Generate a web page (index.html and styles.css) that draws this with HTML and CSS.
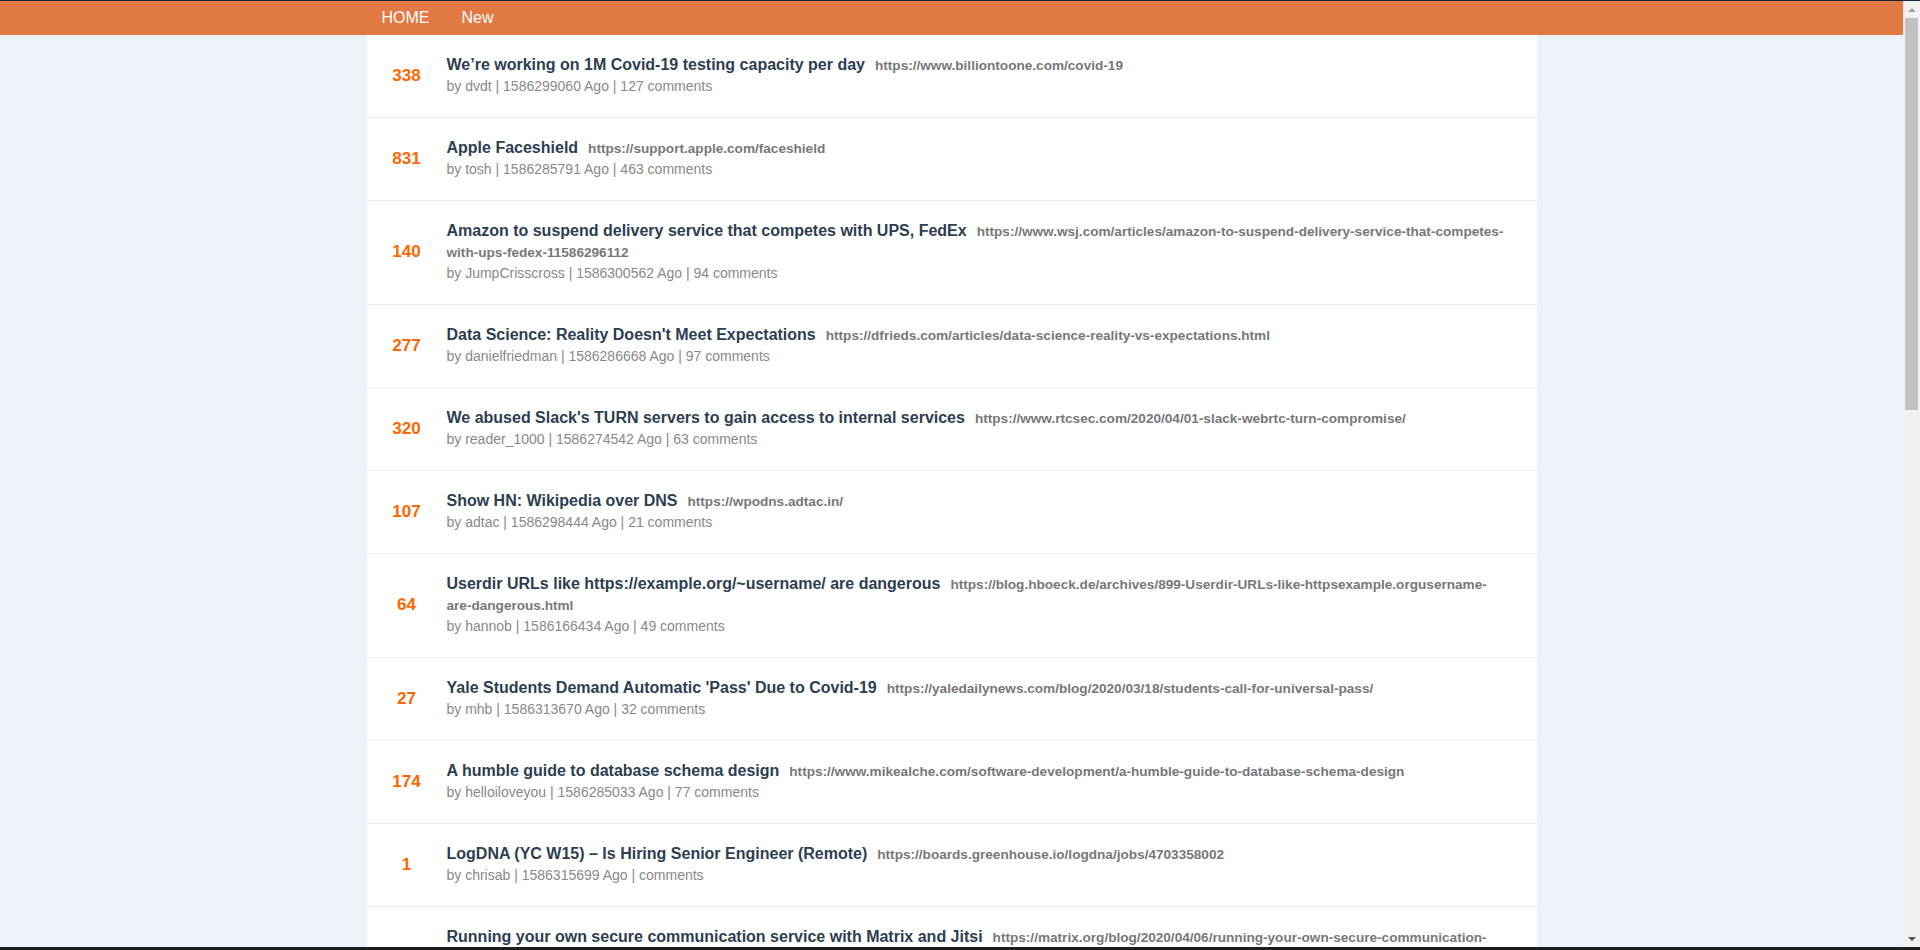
FILE: index.html
```html
<!DOCTYPE html>
<html lang="en">
<head>
<meta charset="utf-8">
<title>Hacker News</title>
<link rel="stylesheet" href="styles.css">
</head>
<body>
<header class="topbar">
  <nav class="container nav">
    <a class="nav-link" href="#">HOME</a>
    <a class="nav-link" href="#">New</a>
  </nav>
</header>
<main class="container list">
  <article class="story">
    <div class="score">338</div>
    <div class="body">
      <div class="headline"><a class="title" href="#">We’re working on 1M Covid-19 testing capacity per day</a><a class="url" href="#">https://www.billiontoone.com/covid-19</a></div>
      <div class="meta">by dvdt | 1586299060 Ago | 127 comments</div>
    </div>
  </article>
  <article class="story">
    <div class="score">831</div>
    <div class="body">
      <div class="headline"><a class="title" href="#">Apple Faceshield</a><a class="url" href="#">https://support.apple.com/faceshield</a></div>
      <div class="meta">by tosh | 1586285791 Ago | 463 comments</div>
    </div>
  </article>
  <article class="story">
    <div class="score">140</div>
    <div class="body">
      <div class="headline"><a class="title" href="#">Amazon to suspend delivery service that competes with UPS, FedEx</a><a class="url" href="#">https://www.wsj.com/articles/amazon-to-suspend-delivery-service-that-competes-with-ups-fedex-11586296112</a></div>
      <div class="meta">by JumpCrisscross | 1586300562 Ago | 94 comments</div>
    </div>
  </article>
  <article class="story">
    <div class="score">277</div>
    <div class="body">
      <div class="headline"><a class="title" href="#">Data Science: Reality Doesn't Meet Expectations</a><a class="url" href="#">https://dfrieds.com/articles/data-science-reality-vs-expectations.html</a></div>
      <div class="meta">by danielfriedman | 1586286668 Ago | 97 comments</div>
    </div>
  </article>
  <article class="story">
    <div class="score">320</div>
    <div class="body">
      <div class="headline"><a class="title" href="#">We abused Slack's TURN servers to gain access to internal services</a><a class="url" href="#">https://www.rtcsec.com/2020/04/01-slack-webrtc-turn-compromise/</a></div>
      <div class="meta">by reader_1000 | 1586274542 Ago | 63 comments</div>
    </div>
  </article>
  <article class="story">
    <div class="score">107</div>
    <div class="body">
      <div class="headline"><a class="title" href="#">Show HN: Wikipedia over DNS</a><a class="url" href="#">https://wpodns.adtac.in/</a></div>
      <div class="meta">by adtac | 1586298444 Ago | 21 comments</div>
    </div>
  </article>
  <article class="story">
    <div class="score">64</div>
    <div class="body">
      <div class="headline"><a class="title" href="#">Userdir URLs like https://example.org/~username/ are dangerous</a><a class="url" href="#">https://blog.hboeck.de/archives/899-Userdir-URLs-like-httpsexample.orgusername-are-dangerous.html</a></div>
      <div class="meta">by hannob | 1586166434 Ago | 49 comments</div>
    </div>
  </article>
  <article class="story">
    <div class="score">27</div>
    <div class="body">
      <div class="headline"><a class="title" href="#">Yale Students Demand Automatic 'Pass' Due to Covid-19</a><a class="url" href="#">https://yaledailynews.com/blog/2020/03/18/students-call-for-universal-pass/</a></div>
      <div class="meta">by mhb | 1586313670 Ago | 32 comments</div>
    </div>
  </article>
  <article class="story">
    <div class="score">174</div>
    <div class="body">
      <div class="headline"><a class="title" href="#">A humble guide to database schema design</a><a class="url" href="#">https://www.mikealche.com/software-development/a-humble-guide-to-database-schema-design</a></div>
      <div class="meta">by helloiloveyou | 1586285033 Ago | 77 comments</div>
    </div>
  </article>
  <article class="story">
    <div class="score">1</div>
    <div class="body">
      <div class="headline"><a class="title" href="#">LogDNA (YC W15) – Is Hiring Senior Engineer (Remote)</a><a class="url" href="#">https://boards.greenhouse.io/logdna/jobs/4703358002</a></div>
      <div class="meta">by chrisab | 1586315699 Ago | comments</div>
    </div>
  </article>
  <article class="story">
    <div class="score">151</div>
    <div class="body">
      <div class="headline"><a class="title" href="#">Running your own secure communication service with Matrix and Jitsi</a><a class="url" href="#">https://matrix.org/blog/2020/04/06/running-your-own-secure-communication-service-with-matrix-and-jitsi</a></div>
      <div class="meta">by Arathorn | 1586278903 Ago | 44 comments</div>
    </div>
  </article>
</main>
<div class="scrollbar" aria-hidden="true">
  <div class="sb-btn"><span class="sb-arrow-up"></span></div>
  <div class="sb-track"><div class="sb-thumb"></div></div>
  <div class="sb-btn"><span class="sb-arrow-down"></span></div>
</div>
<div class="frame-top"></div>
<div class="frame-bottom"></div>
</body>
</html>
```

FILE: styles.css
```css
html, body {
  margin: 0;
  padding: 0;
}

body {
  background: #eef2f9;
  font-family: "Liberation Sans", Arial, sans-serif;
  font-size: 14px;
  color: #333;
  margin-right: 17px;
}

a {
  text-decoration: none;
}

.container {
  width: 1170px;
  margin: 0 auto;
  box-sizing: border-box;
}

.topbar {
  background: #e27942;
  border-top: 1px solid #17213a;
  height: 34px;
}

.nav {
  display: flex;
  gap: 32px;
  padding: 0 15px;
  height: 33px;
  align-items: center;
}

.nav-link {
  color: #ffffff;
  font-size: 16px;
  line-height: 33px;
}

.list {
  background: #ffffff;
  min-height: 2186px;
}

.story {
  display: flex;
  align-items: center;
  padding: 20px 30px 21px 0;
  border-bottom: 1px solid #ececec;
}

.score {
  flex: 0 0 80px;
  text-align: center;
  color: #ff6600;
  font-size: 17px;
  font-weight: bold;
}

.body {
  flex: 1 1 auto;
  min-width: 0;
}

.headline {
  font-size: 16px;
  line-height: 21px;
  margin-top: -1px;
  margin-bottom: 1px;
}

.title {
  color: #2c3e50;
  font-size: 16px;
  font-weight: bold;
}

.url {
  color: #777777;
  font-size: 13.6px;
  line-height: 14px;
  font-weight: bold;
  padding-left: 10px;
}

.meta {
  color: #888888;
  font-size: 14px;
  line-height: 20px;
}

/* window chrome: vertical scrollbar and frame edges */
.scrollbar {
  position: fixed;
  top: 0;
  right: 0;
  bottom: 3px;
  width: 17px;
  background: #f1f1f1;
  display: flex;
  flex-direction: column;
}

.sb-btn {
  height: 17px;
  flex: 0 0 17px;
  display: flex;
  align-items: center;
  justify-content: center;
}

.sb-arrow-up {
  width: 0;
  height: 0;
  border-left: 4px solid transparent;
  border-right: 4px solid transparent;
  border-bottom: 4px solid #a3a3a3;
  margin-top: 2px;
}

.sb-arrow-down {
  width: 0;
  height: 0;
  border-left: 4px solid transparent;
  border-right: 4px solid transparent;
  border-top: 4px solid #505050;
}

.sb-track {
  flex: 1 1 auto;
  padding: 1px 2px 0;
}

.sb-thumb {
  height: 392px;
  background: #c1c1c1;
}

.frame-top {
  position: fixed;
  top: 0;
  left: 0;
  right: 0;
  height: 1px;
  background: #17213a;
}

.frame-bottom {
  position: fixed;
  left: 0;
  right: 0;
  bottom: 0;
  height: 3px;
  background: #1e1e1e;
}
```
